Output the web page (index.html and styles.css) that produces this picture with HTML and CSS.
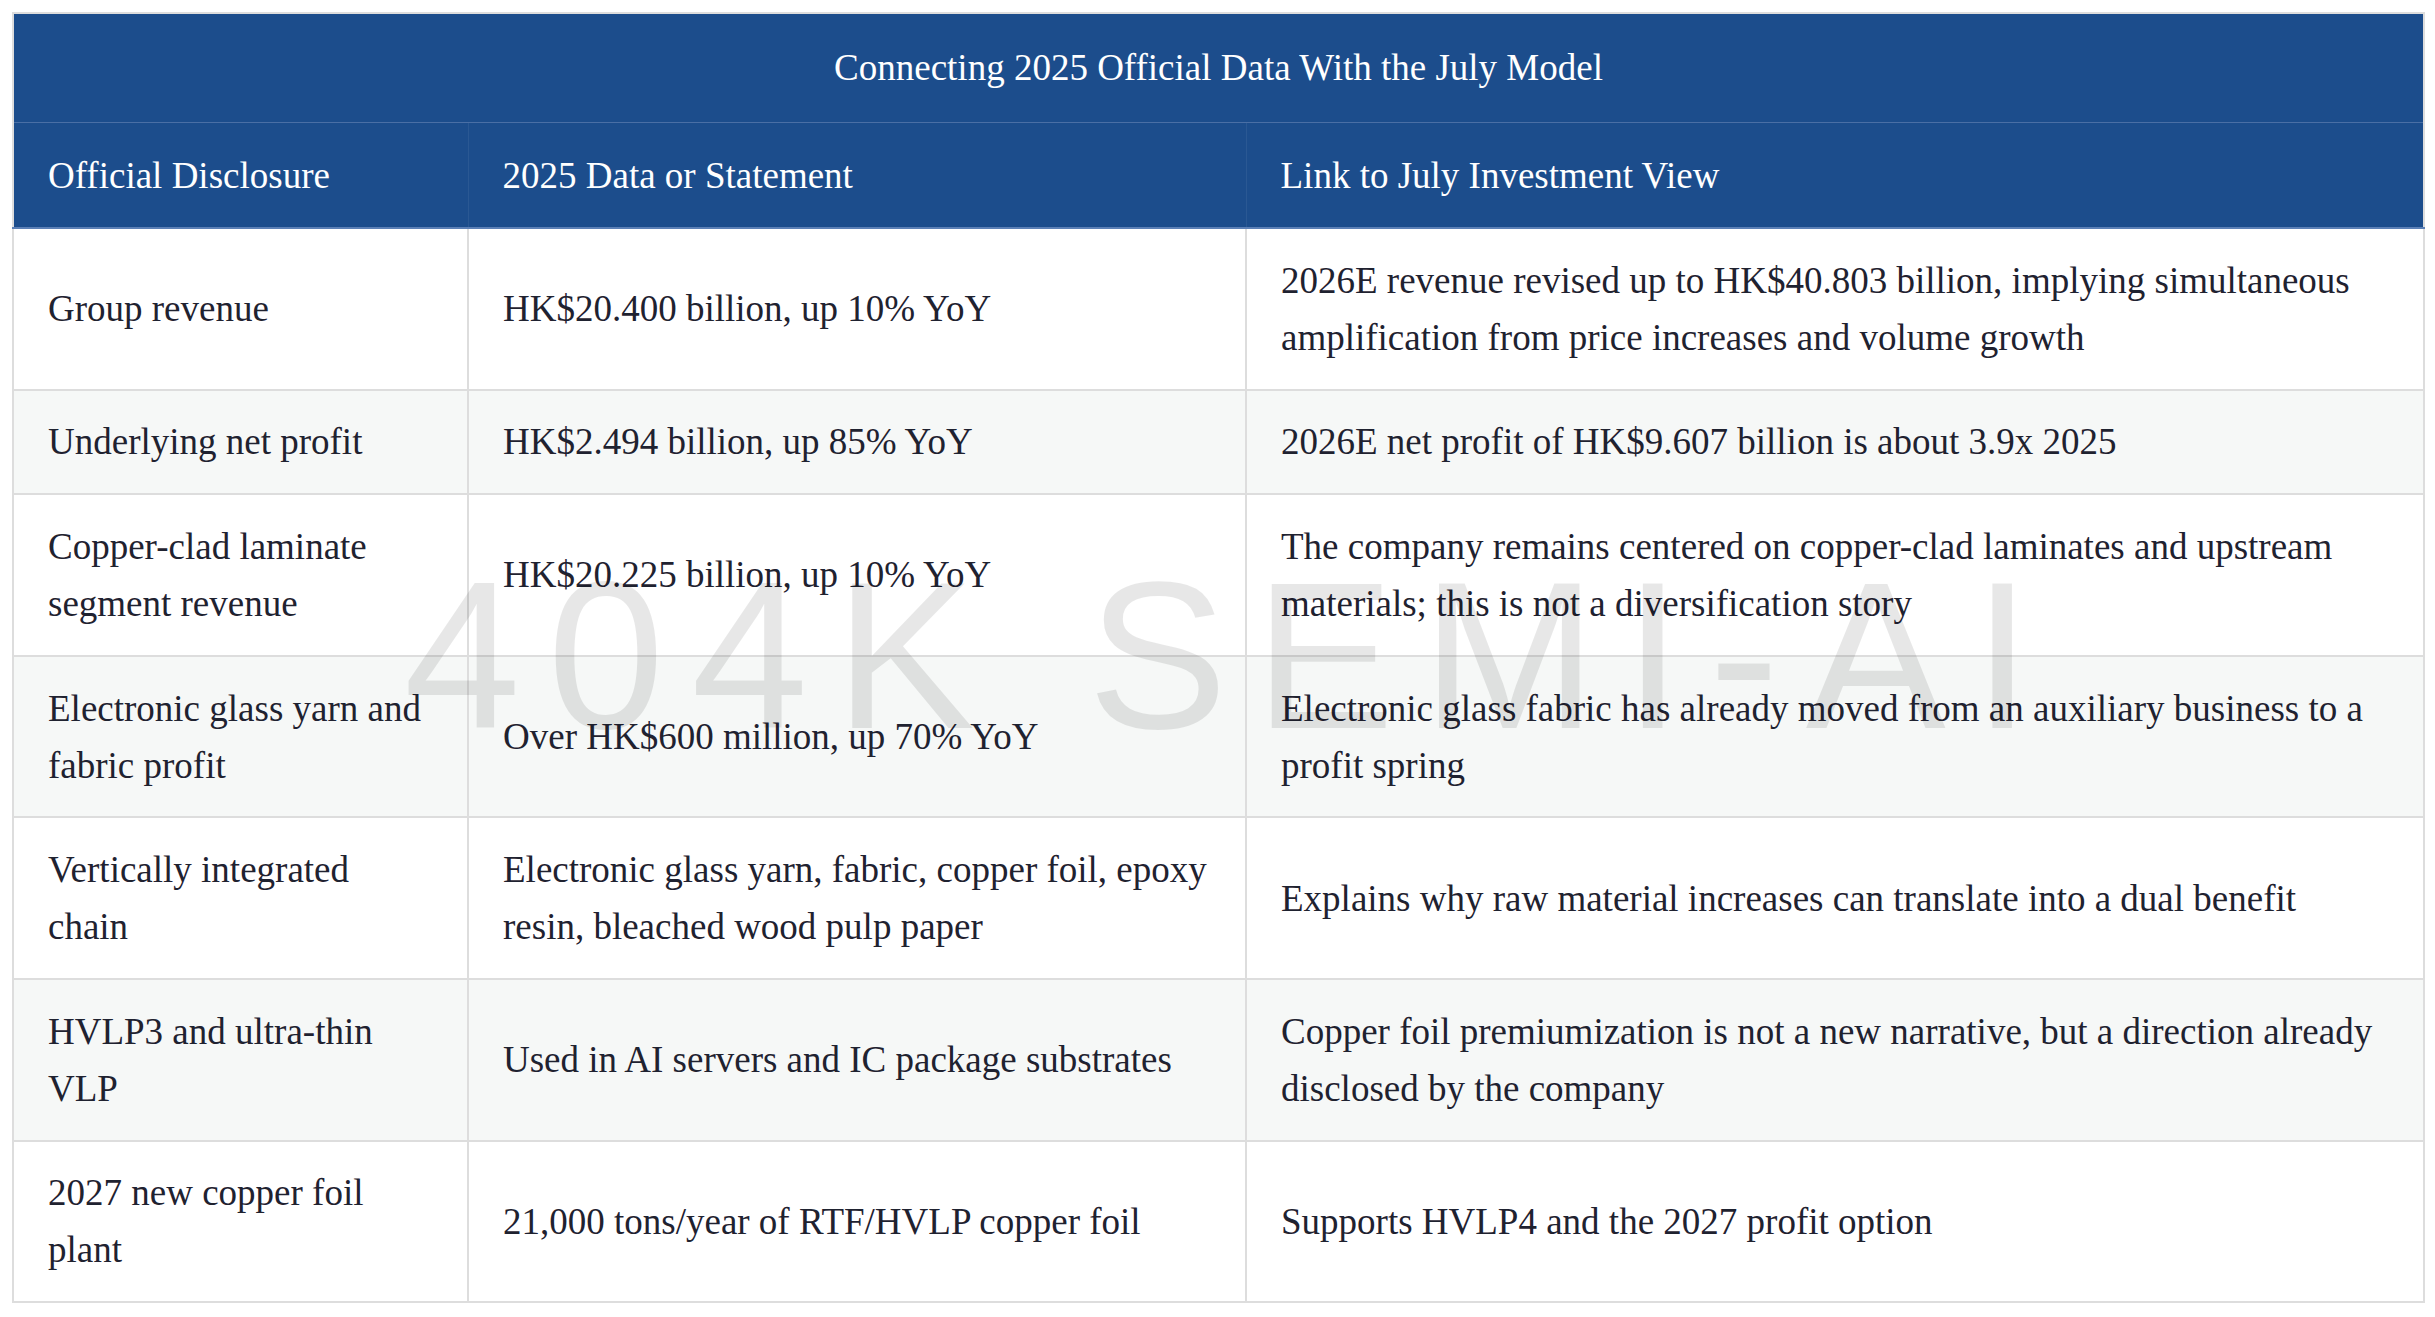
FILE: index.html
```html
<!DOCTYPE html>
<html lang="en">
<head>
<meta charset="utf-8">
<title>Connecting 2025 Official Data With the July Model</title>
<link rel="stylesheet" href="styles.css">
</head>
<body>
<table class="data-table">
  <colgroup>
    <col class="col-a">
    <col class="col-b">
    <col class="col-c">
  </colgroup>
  <thead>
    <tr class="title-row">
      <th colspan="3">Connecting 2025 Official Data With the July Model</th>
    </tr>
    <tr class="head-row">
      <th>Official Disclosure</th>
      <th>2025 Data or Statement</th>
      <th>Link to July Investment View</th>
    </tr>
  </thead>
  <tbody>
    <tr>
      <td>Group revenue</td>
      <td>HK$20.400 billion, up 10% YoY</td>
      <td>2026E revenue revised up to HK$40.803 billion, implying simultaneous amplification from price increases and volume growth</td>
    </tr>
    <tr>
      <td>Underlying net profit</td>
      <td>HK$2.494 billion, up 85% YoY</td>
      <td>2026E net profit of HK$9.607 billion is about 3.9x 2025</td>
    </tr>
    <tr>
      <td>Copper-clad laminate segment revenue</td>
      <td>HK$20.225 billion, up 10% YoY</td>
      <td>The company remains centered on copper-clad laminates and upstream materials; this is not a diversification story</td>
    </tr>
    <tr>
      <td>Electronic glass yarn and fabric profit</td>
      <td>Over HK$600 million, up 70% YoY</td>
      <td>Electronic glass fabric has already moved from an auxiliary business to a profit spring</td>
    </tr>
    <tr>
      <td>Vertically integrated chain</td>
      <td>Electronic glass yarn, fabric, copper foil, epoxy resin, bleached wood pulp paper</td>
      <td>Explains why raw material increases can translate into a dual benefit</td>
    </tr>
    <tr>
      <td>HVLP3 and ultra-thin VLP</td>
      <td>Used in AI servers and IC package substrates</td>
      <td>Copper foil premiumization is not a new narrative, but a direction already disclosed by the company</td>
    </tr>
    <tr>
      <td>2027 new copper foil plant</td>
      <td>21,000 tons/year of RTF/HVLP copper foil</td>
      <td>Supports HVLP4 and the 2027 profit option</td>
    </tr>
  </tbody>
</table>
<div class="watermark" aria-hidden="true">404K SEMI-AI</div>
</body>
</html>
```

FILE: styles.css
```css
html, body {
  margin: 0;
  padding: 0;
  background: #ffffff;
}

body {
  padding: 12px;
  font-family: "Liberation Serif", "DejaVu Serif", serif;
  color: #1f2230;
}

.data-table {
  width: 2411px;
  border-collapse: collapse;
  table-layout: fixed;
  font-size: 37px;
  line-height: 57px;
  border: 2px solid #dddddd;
}

.col-a { width: 455px; }
.col-b { width: 778px; }
.col-c { width: 1178px; }

.data-table th {
  background: #1c4d8c;
  color: #ffffff;
  font-weight: normal;
  text-align: left;
  padding: 24px 34px;
}

.title-row th {
  text-align: center;
  padding: 25px 34px 26px;
  border-bottom: 1px solid #4a6fa5;
}

.head-row th {
  padding: 24px 34px 23px;
  border-right: 1px solid #2a5893;
  border-bottom: 2px solid #5c80b6;
}

.head-row th:last-child {
  border-right: none;
}

.data-table td {
  padding: 22.8px 20px 22.8px 34px;
  vertical-align: middle;
  border: 2px solid #dddddd;
}

.data-table td:first-child {
  padding-right: 42px;
}

.data-table tbody tr:nth-child(even) td {
  background: #f6f8f7;
}

.watermark {
  position: fixed;
  left: 0;
  right: 0;
  top: 546px;
  text-align: center;
  font-family: "Liberation Sans", Arial, sans-serif;
  font-size: 210px;
  line-height: 220px;
  letter-spacing: 27px;
  padding-left: 27px;
  color: rgba(0, 0, 0, 0.095);
  pointer-events: none;
  white-space: nowrap;
}
```
